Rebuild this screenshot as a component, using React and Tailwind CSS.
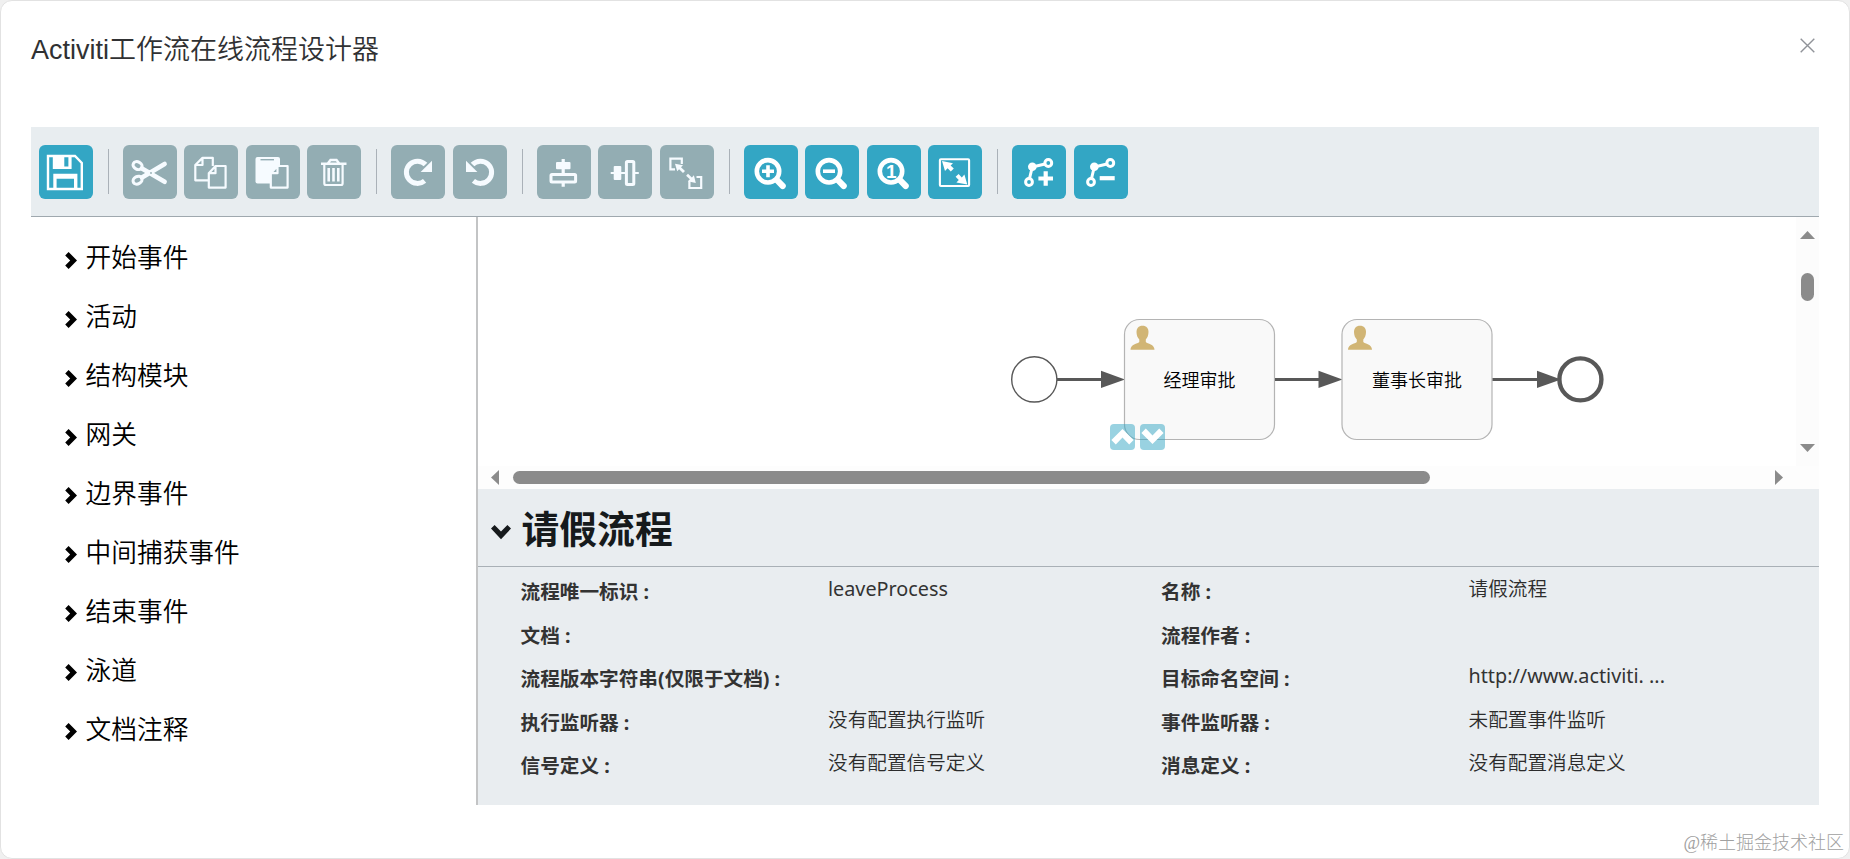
import React, { useState } from 'react';
import clsx from 'clsx';

const stroke = { fill: 'none', stroke: 'currentColor' };

const Magnifier = ({ children }) => (
  <>
    <circle cx="24" cy="26.3" r="11.2" {...stroke} strokeWidth="4.6" />
    <path d="M33 35.2L38.7 41" {...stroke} strokeWidth="6.2" strokeLinecap="round" />
    {children}
  </>
);

const Bendpoint = ({ children }) => (
  <>
    <path d="M33 19L20.3 22L17.5 33.5" {...stroke} strokeWidth="3" />
    <circle cx="20.3" cy="21.7" r="4.3" fill="currentColor" />
    <circle cx="36.3" cy="18" r="3.4" {...stroke} strokeWidth="3" />
    <circle cx="17" cy="37" r="3.4" {...stroke} strokeWidth="3" />
    {children}
  </>
);

const FrontPage = ({ filled }) => (
  <path
    d="M31.5 21H41.6V42.6H24.8V28.2ZM31.5 21V28.2H24.8"
    className={filled ? 'fill-[#93adb3]' : 'fill-none'}
    stroke="currentColor"
    strokeWidth="2.2"
    strokeLinejoin="round"
  />
);

// every icon is drawn on a 54x54 grid, the size of the button
const ICONS = {
  save: (
    <>
      <path d="M9 11H36L42.8 18V44H9Z" {...stroke} strokeWidth="2.4" />
      <path fillRule="evenodd" fill="currentColor" d="M13.8 10H32.6V24H13.8ZM25.3 12V21.6H29.4V12Z" />
      <path fillRule="evenodd" fill="currentColor" d="M14.3 28.8H38.4V45H14.3ZM17.6 33.8V43H35V33.8Z" />
    </>
  ),
  cut: (
    <>
      <ellipse cx="14.6" cy="20.6" rx="4.7" ry="3.7" transform="rotate(28 14.6 20.6)" {...stroke} strokeWidth="3.1" />
      <ellipse cx="14.6" cy="35.2" rx="4.7" ry="3.7" transform="rotate(-28 14.6 35.2)" {...stroke} strokeWidth="3.1" />
      <path d="M19 23.5L41.6 36.8M19 32.5L41.6 19" {...stroke} strokeWidth="4.6" strokeLinecap="round" />
      <circle cx="28" cy="28" r="0.9" className="fill-[#93adb3]" />
    </>
  ),
  copy: (
    <>
      <path d="M24 35.3H11.3V20L18.5 12.9H28.8V21M18.5 12.9V20H11.3" {...stroke} strokeWidth="2.2" strokeLinejoin="round" />
      <FrontPage />
    </>
  ),
  paste: (
    <>
      <rect x="9.5" y="12" width="24.5" height="26.5" rx="2" fill="currentColor" />
      <rect x="14.5" y="14" width="13.5" height="1.4" className="fill-[#93adb3]" />
      <FrontPage filled />
    </>
  ),
  trash: (
    <>
      <path d="M14 18.7H39.5M21 18.2L23.5 15H29.5L32 18.2" {...stroke} strokeWidth="2.4" />
      <path d="M17.3 19V38.2Q17.3 40 19 40H34Q35.6 40 35.6 38.2V19" {...stroke} strokeWidth="2.2" />
      <path d="M21.7 23V36.5M26.5 23V36.5M31.3 23V36.5" {...stroke} strokeWidth="2.6" />
    </>
  ),
  redo: (
    <>
      <path d="M34.5 19.6A11.1 11.1 0 1 0 33.6 35.8" {...stroke} strokeWidth="5" />
      <path d="M41 15.8V27H29.6Z" fill="currentColor" />
    </>
  ),
  undo: (
    <>
      <path d="M19.5 19.6A11.1 11.1 0 1 1 20.4 35.8" {...stroke} strokeWidth="5" />
      <path d="M13 15.8V27H24.4Z" fill="currentColor" />
    </>
  ),
  alignV: (
    <>
      <path d="M26.2 14V29M26.2 38V41.8" {...stroke} strokeWidth="3.2" />
      <rect x="19" y="17" width="14.5" height="7.2" rx="1" fill="currentColor" />
      <rect x="14" y="29.6" width="24.6" height="7.4" rx="1" {...stroke} strokeWidth="3" />
    </>
  ),
  alignH: (
    <>
      <path d="M12.7 28H28M37 28H40.8" {...stroke} strokeWidth="2.2" />
      <rect x="15.7" y="21" width="7.6" height="14" rx="1" fill="currentColor" />
      <rect x="28.4" y="16.4" width="7.4" height="23.2" rx="1" {...stroke} strokeWidth="3" />
    </>
  ),
  sameSize: (
    <>
      <path d="M15 24.3H10.4V13.6H21.8V19M29.4 36V43H41.2V32H36.5" {...stroke} strokeWidth="2.2" />
      <path d="M15 18.7L23 20.3L21 22.3L25 26.1L23 28L19.1 24.2L17.2 26.2Z" fill="currentColor" />
      <path d="M35.8 38L27.8 36.2L29.9 34.2L26.1 30.7L28 28.8L31.9 32.4L33.9 30.2Z" fill="currentColor" />
    </>
  ),
  zoomIn: (
    <Magnifier>
      <path d="M24 20.2V32.2M18 26.2H30" {...stroke} strokeWidth="3.6" />
    </Magnifier>
  ),
  zoomOut: (
    <Magnifier>
      <path d="M18 26.2H30" {...stroke} strokeWidth="3.6" />
    </Magnifier>
  ),
  zoomActual: (
    <Magnifier>
      <text x="24.2" y="33" textAnchor="middle" fill="currentColor" className="font-['Liberation_Sans',sans-serif] text-[19px] font-bold">1</text>
    </Magnifier>
  ),
  zoomFit: (
    <>
      <rect x="11.9" y="14.2" width="29.2" height="26.8" rx="1" {...stroke} strokeWidth="2.1" />
      <path d="M14 16L25 18.2L22.6 20.6L25.8 23.6L22.8 26.4L19.6 23.2L17 26Z" fill="currentColor" />
      <path d="M39.3 39.6L28.4 37.4L30.8 35L27.6 31.8L30.6 29L33.8 32.4L36.4 29.4Z" fill="currentColor" />
    </>
  ),
  bendAdd: (
    <Bendpoint>
      <path d="M33.7 26.2V40.8M26.4 33.5H41" {...stroke} strokeWidth="4.2" />
    </Bendpoint>
  ),
  bendRemove: (
    <Bendpoint>
      <path d="M25.7 33.2H40.7" {...stroke} strokeWidth="4.2" />
    </Bendpoint>
  ),
};

const TOOLBAR = [
  [{ id: 'save', enabled: true }],
  [{ id: 'cut' }, { id: 'copy' }, { id: 'paste' }, { id: 'trash' }],
  [{ id: 'redo' }, { id: 'undo' }],
  [{ id: 'alignV' }, { id: 'alignH' }, { id: 'sameSize' }],
  [
    { id: 'zoomIn', enabled: true },
    { id: 'zoomOut', enabled: true },
    { id: 'zoomActual', enabled: true },
    { id: 'zoomFit', enabled: true },
  ],
  [{ id: 'bendAdd', enabled: true }, { id: 'bendRemove', enabled: true }],
];

const PALETTE = ['开始事件', '活动', '结构模块', '网关', '边界事件', '中间捕获事件', '结束事件', '泳道', '文档注释'];

const PROPERTIES = [
  { title: '流程唯一标识', value: 'leaveProcess', latin: true },
  { title: '名称', value: '请假流程' },
  { title: '文档', value: '' },
  { title: '流程作者', value: '' },
  { title: '流程版本字符串(仅限于文档)', value: '' },
  { title: '目标命名空间', value: 'http://www.activiti. ...', latin: true },
  { title: '执行监听器', value: '没有配置执行监听' },
  { title: '事件监听器', value: '未配置事件监听' },
  { title: '信号定义', value: '没有配置信号定义' },
  { title: '消息定义', value: '没有配置消息定义' },
];

function Toolbar() {
  return (
    <div className="flex h-[90px] shrink-0 items-center border-b border-[#9fa8ae] bg-[#e8edf0] pl-[7.7px]">
      {TOOLBAR.map((group, i) => (
        <React.Fragment key={i}>
          {i > 0 && <div className="mr-[14.1px] ml-[14.9px] h-[45px] w-px shrink-0 bg-[#aab1b8]" />}
          <div className="flex gap-[7.5px]">
            {group.map(({ id, enabled }) => (
              <button
                key={id}
                disabled={!enabled}
                className={clsx('h-[54px] w-[54px] rounded-[6px]', enabled ? 'bg-[#33a6c4] text-white' : 'bg-[#93adb3] text-[#f6fbff]')}
              >
                <svg viewBox="0 0 54 54" className="h-[54px] w-[54px]">{ICONS[id]}</svg>
              </button>
            ))}
          </div>
        </React.Fragment>
      ))}
    </div>
  );
}

function Palette() {
  return (
    <ul className="w-[447px] shrink-0 border-r-2 border-[#c3c4c5] pt-[12.4px] pl-[34px]">
      {PALETTE.map(name => (
        <li key={name} className="flex h-[58.9px] items-center gap-[8.6px] text-[25.7px] leading-none font-[350] text-black">
          <svg viewBox="0 0 12 17" className="mt-[3px] h-[17px] w-3">
            <path d="M3.6 0L12 8.5L3.6 17L0.2 13.6L5.2 8.5L0.2 3.4Z" />
          </svg>
          <span className="-mt-px">{name}</span>
        </li>
      ))}
    </ul>
  );
}

function Flow({ from, to }) {
  return (
    <g className="fill-[#585858] stroke-[#585858]">
      <path d={`M${from} 162.4H${to - 20}`} strokeWidth="3" />
      <path d={`M${to} 162.4L${to - 24} 153.8V171Z`} stroke="none" />
    </g>
  );
}

function UserTask({ x, label }) {
  return (
    <g transform={`translate(${x} 102.5)`}>
      <rect width="150" height="120" rx="15" className="fill-[#f9f9f9] stroke-[#b4b4b4]" strokeWidth="1.2" />
      <path
        className="fill-[#d1b575]"
        d="M18 6.2C22 6.2 24 8.8 24 12.6C24 16 22.8 18.4 21.3 20V22.4C23 24.3 30 24.5 30 30.2H6C6 24.5 13 24.3 14.8 22.4V20C13.2 18.4 12 16 12 12.6C12 8.8 14 6.2 18 6.2Z"
      />
      <text x="75" y="67.8" textAnchor="middle" className="fill-black text-[18px] font-[350]">{label}</text>
    </g>
  );
}

function MorphButton({ x, down }) {
  return (
    <g transform={`translate(${x} 207)`}>
      <rect width="25" height="26" rx="4" className="fill-[#33a6c4]/50" />
      <path
        className="fill-white"
        transform={down ? 'rotate(180 12.5 12.5)' : undefined}
        d="M12.5 5L23.6 16L19.2 20.4L12.5 13.6L5.8 20.4L1.4 16Z"
      />
    </g>
  );
}

function Canvas() {
  return (
    <div className="flex h-[272px] shrink-0 flex-col bg-white">
      <div className="flex min-h-0 flex-1">
        <svg width="1318" height="249" className="block shrink-0">
          <circle cx="556.3" cy="162.4" r="22.6" className="fill-white stroke-[#585858]" strokeWidth="1.4" />
          <Flow from={579} to={647} />
          <UserTask x={646.5} label="经理审批" />
          <Flow from={797} to={864.5} />
          <UserTask x={864} label="董事长审批" />
          <Flow from={1014.5} to={1083} />
          <circle cx="1102.4" cy="162.4" r="21" className="fill-white stroke-[#585858]" strokeWidth="4.4" />
          <MorphButton x={632} />
          <MorphButton x={662} down />
        </svg>
        <div className="flex flex-1 flex-col items-center bg-[#fcfcfc] py-[14px]">
          <svg viewBox="0 0 15 8" className="h-2 w-[15px] fill-[#8b8b8b]"><path d="M7.5 0L15 8H0Z" /></svg>
          <div className="mt-[34px] h-7 w-[13px] rounded-full bg-[#8b8b8b]" />
          <svg viewBox="0 0 15 8" className="mt-auto h-2 w-[15px] fill-[#8b8b8b]"><path d="M7.5 8L15 0H0Z" /></svg>
        </div>
      </div>
      <div className="flex h-[23px] shrink-0 items-center bg-[#fdfdfd] pl-[13px] pr-[36px]">
        <svg viewBox="0 0 8 15" className="h-[15px] w-2 fill-[#8b8b8b]"><path d="M0 7.5L8 0V15Z" /></svg>
        <div className="ml-[14px] h-[13px] w-[917px] rounded-full bg-[#8b8b8b]" />
        <svg viewBox="0 0 8 15" className="ml-auto h-[15px] w-2 fill-[#8b8b8b]"><path d="M8 7.5L0 0V15Z" /></svg>
      </div>
    </div>
  );
}

function Properties() {
  const [open, setOpen] = useState(true);

  return (
    <div className="flex-1 bg-[#e9edf0]">
      <button
        onClick={() => setOpen(o => !o)}
        className="flex h-[78px] w-full items-center gap-[10.5px] border-b border-[#a9b0b6] pl-[13px] text-left"
      >
        <svg viewBox="0 0 20 15" className={clsx('mt-[9px] h-[15px] w-5 fill-[#161a1c]', !open && '-rotate-90')}>
          <path d="M3.6 0L10 6.6L16.4 0L20 3.6L10 14.2L0 3.6Z" />
        </svg>
        <span className="mt-[2px] text-[37.8px] leading-none font-bold text-[#161a1c]">请假流程</span>
      </button>
      {open && (
        <dl className="grid grid-cols-[640.5px_1fr] pt-[3px] pl-[42.5px] text-[19.65px] leading-[29px] text-[#333]">
          {PROPERTIES.map(({ title, value, latin }) => (
            <div key={title} className="flex h-[43.5px]">
              <dt className="w-[307.5px] shrink-0 pt-[7px] font-bold">{title}&nbsp;:</dt>
              <dd className={clsx('pt-1 whitespace-pre', latin ? 'text-[19.8px] font-normal' : 'font-[350] text-[#2c2c2c]')}>{value}</dd>
            </div>
          ))}
        </dl>
      )}
    </div>
  );
}

export default function App() {
  return (
    <div className="h-[859px] w-[1850px] overflow-hidden bg-[#f0f0f0] font-['Noto_Sans','Noto_Sans_CJK_SC',sans-serif]">
      <div className="relative flex h-full flex-col rounded-[12px] border border-[#e2e2e2] bg-white px-[30px]">
        <header className="flex h-[126px] shrink-0 items-start justify-between pt-[28px]">
          <h1 className="pt-px font-['Liberation_Sans','Noto_Sans_CJK_SC',sans-serif] text-[27px] leading-[40px] font-[350] text-[#303133]">
            Activiti工作流在线流程设计器
          </h1>
          <button className="mt-[8.5px] mr-[4.5px]">
            <svg viewBox="0 0 15 15" className="h-[15px] w-[15px] fill-none stroke-[#909399]" strokeWidth="1.4">
              <path d="M0.7 0.7L14.3 14.3M14.3 0.7L0.7 14.3" />
            </svg>
          </button>
        </header>
        <Toolbar />
        <main className="flex h-[588px] shrink-0">
          <Palette />
          <section className="flex min-w-0 flex-1 flex-col">
            <Canvas />
            <Properties />
          </section>
        </main>
        <div className="absolute right-[5px] bottom-[2px] font-['Liberation_Serif','Noto_Sans_CJK_SC',serif] text-[18px] leading-[26px] font-light text-[#a0a0a0]">
          @稀土掘金技术社区
        </div>
      </div>
    </div>
  );
}
